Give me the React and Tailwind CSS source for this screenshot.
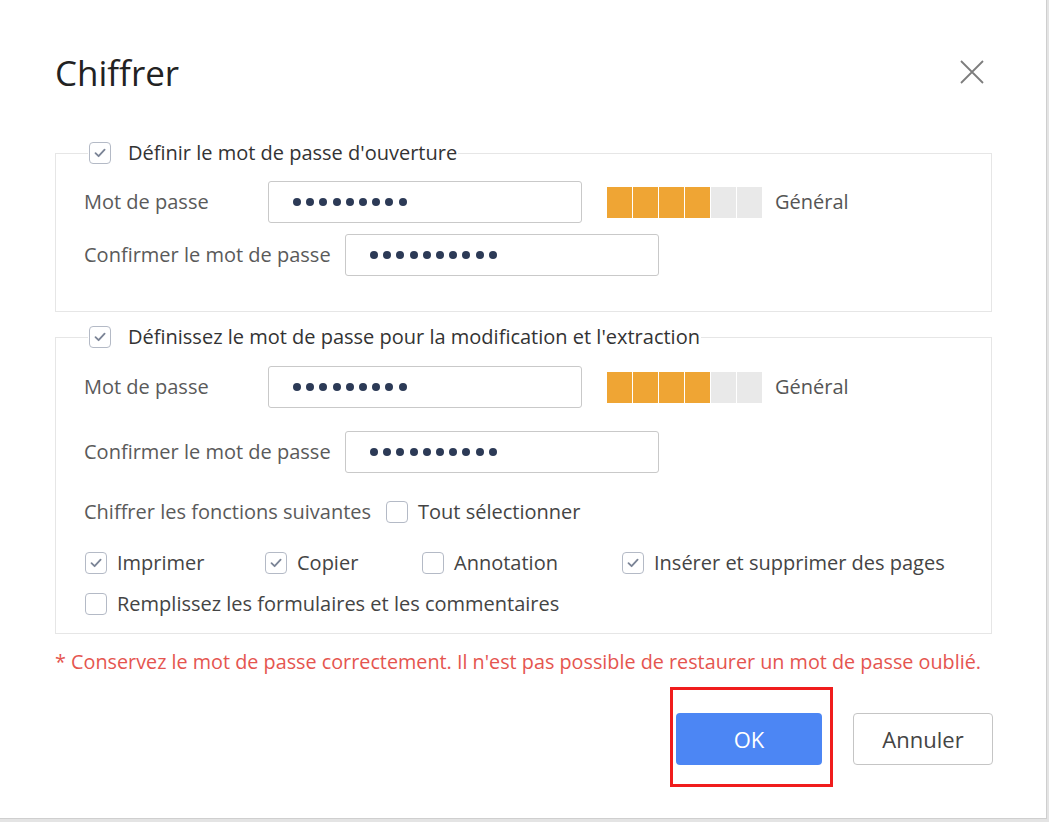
import React from "react";

const font = { fontFamily: '"Open Sans", "Noto Sans", sans-serif' };

const Check = ({ checked }) => (
  <span className="flex h-[22px] w-[22px] shrink-0 items-center justify-center rounded-[4px] border-[1.5px] border-[#b4bac6] bg-white">
    {checked && (
      <svg width="14" height="14" viewBox="0 0 14 14" fill="none">
        <path d="M2.5 7.2 5.6 10.2 11.6 3.6" stroke="#7b8496" strokeWidth="1.8" strokeLinecap="round" strokeLinejoin="round" />
      </svg>
    )}
  </span>
);

const Dots = ({ n }) => (
  <div className="flex gap-[5.2px]">
    {Array.from({ length: n }).map((_, i) => (
      <span key={i} className="h-2 w-2 rounded-full bg-[#2c3a56]" />
    ))}
  </div>
);

const Strength = () => (
  <div className="ml-[25px] flex items-center">
    <div className="flex gap-px">
      {[1, 1, 1, 1, 0, 0].map((on, i) => (
        <span key={i} className={on ? "h-[31px] w-[25px] bg-[#efa534]" : "h-[31px] w-[25px] bg-[#e9e9e9]"} />
      ))}
    </div>
    <span className="ml-[13px] text-[20px] leading-[28px] text-[#555]">Général</span>
  </div>
);

const Field = ({ label, dots, width, strength, className }) => (
  <div className={"flex items-center " + (className || "")}>
    <span className="text-[20px] leading-[28px] text-[#5a5a5a]" style={{ width }}>{label}</span>
    <div className="flex h-[42px] w-[314px] items-center rounded-[3px] border border-[#c9c9c9] pl-6">
      <Dots n={dots} />
    </div>
    {strength && <Strength />}
  </div>
);

const Group = ({ title, children, className }) => (
  <fieldset className={"w-[937px] border border-[#e6e6e6] pl-[28px] " + (className || "")}>
    <legend className="ml-[4px] flex items-center gap-[17px] px-[1px] text-[20px] leading-[26px] text-[#333]">
      <Check checked />
      <span>{title}</span>
    </legend>
    {children}
  </fieldset>
);

const Opt = ({ checked, label, w }) => (
  <label className="flex items-center gap-[10px] text-[20px] leading-[28px] text-[#444]" style={{ width: w }}>
    <Check checked={checked} />
    <span>{label}</span>
  </label>
);

export default function App() {
  return (
    <div className="h-[822px] w-full bg-[#e4e4e4]" style={font}>
      <div className="flex h-[819px] w-[1047px] flex-col border-r border-b border-[#cfcfcf] bg-white pl-[55px]">
        <div className="flex items-center justify-between pt-[48px] pr-[61px]">
          <h1 className="text-[35px] leading-[50px] text-[#222]">Chiffrer</h1>
          <svg width="26" height="26" viewBox="0 0 26 26" className="mt-[-2px]">
            <path d="M2 2 24 24M24 2 2 24" stroke="#7d7d7d" strokeWidth="1.8" />
          </svg>
        </div>

        <Group title="Définir le mot de passe d'ouverture" className="mt-[42px] h-[172px]">
          <Field label="Mot de passe" dots={9} width={184} strength className="mt-[15px]" />
          <Field label="Confirmer le mot de passe" dots={10} width={261} className="mt-[11px]" />
        </Group>

        <Group title="Définissez le mot de passe pour la modification et l'extraction" className="mt-[12px] h-[310px]">
          <Field label="Mot de passe" dots={9} width={184} strength className="mt-[16px]" />
          <Field label="Confirmer le mot de passe" dots={10} width={261} className="mt-[23px]" />
          <div className="mt-[25px] flex items-center text-[20px] leading-[28px]">
            <span className="w-[302px] text-[#5a5a5a]">Chiffrer les fonctions suivantes</span>
            <Opt label="Tout sélectionner" />
          </div>
          <div className="mt-[23px] flex items-center pl-[1px]">
            <Opt checked label="Imprimer" w={180} />
            <Opt checked label="Copier" w={157} />
            <Opt label="Annotation" w={200} />
            <Opt checked label="Insérer et supprimer des pages" />
          </div>
          <div className="mt-[13px] flex items-center pl-[1px]">
            <Opt label="Remplissez les formulaires et les commentaires" />
          </div>
        </Group>

        <p className="mt-[14px] text-[19.8px] leading-[28px] text-[#e5554f]">
          * Conservez le mot de passe correctement. Il n'est pas possible de restaurer un mot de passe oublié.
        </p>

        <div className="mt-[11px] flex items-start justify-end pr-[53px]">
          <div className="border-[3px] border-[#f01c1c] pt-[23px] pr-[8px] pb-[19px] pl-[3px]">
            <button className="h-[52px] w-[146px] rounded-[4px] bg-[#4c86f4] text-[22px] text-white">OK</button>
          </div>
          <button className="ml-[20px] mt-[26px] h-[52px] w-[140px] rounded-[4px] border border-[#c5c5c5] bg-white text-[22px] text-[#444]">
            Annuler
          </button>
        </div>
      </div>
    </div>
  );
}
